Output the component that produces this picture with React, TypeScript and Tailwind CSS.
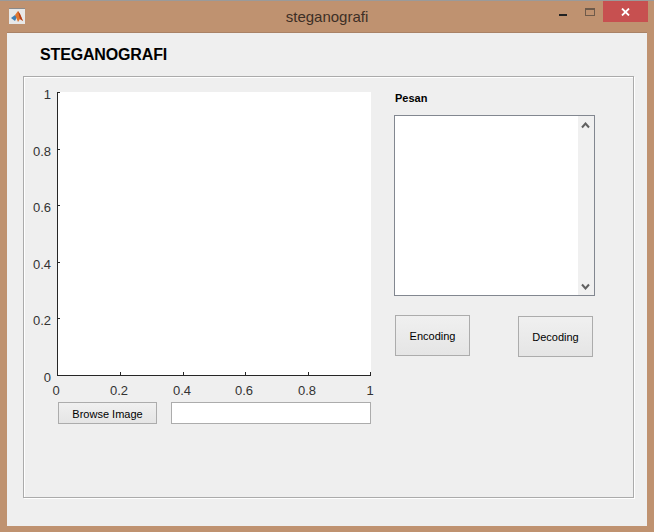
import React from 'react';

const font = { fontFamily: '"Liberation Sans", Arial, sans-serif' };

const ticks = [0, 0.2, 0.4, 0.6, 0.8, 1];

// axes drawn like the MATLAB figure: white plot, left and bottom lines, short inward ticks
function Axes() {
  const left = 33;
  const top = 8;
  const w = 314;
  const h = 283;
  return (
    <svg width={350} height={318} className="block" style={font}>
      <rect x={left} y={top} width={w} height={h} fill="#fff" />
      <path d={`M${left + 0.5} ${top}V${top + h + 0.5}H${left + w}`} fill="none" stroke="#262626" strokeWidth={1} />
      {ticks.map((t) => {
        const x = Math.round(left + t * w);
        const y = Math.round(top + h - t * h);
        return (
          <g key={t}>
            <path d={`M${x + (t === 1 ? -0.5 : 0.5)} ${top + h}v-3`} stroke="#262626" />
            <path d={`M${left} ${y + 0.5}h3`} stroke="#262626" />
            <text x={x - 1} y={top + h + 20} fontSize={13} fill="#333" textAnchor="middle">{t}</text>
            <text x={27} y={top + h - t * h + 7} fontSize={13} fill="#333" textAnchor="end">{t}</text>
          </g>
        );
      })}
    </svg>
  );
}

function Btn({ label, className }: { label: string; className: string }) {
  return (
    <button className={`border border-[#acacac] bg-gradient-to-b from-[#f0f0f0] to-[#e5e5e5] text-[11px] text-black ${className}`}>
      {label}
    </button>
  );
}

export default function App() {
  return (
    <div className="w-[654px] h-[532px] bg-[#bf9270] flex flex-col overflow-hidden" style={font}>
      <div className="h-px bg-[#9a9a9a] shrink-0" />
      {/* title bar */}
      <div className="h-[31px] shrink-0 flex items-start relative">
        <div className="ml-[9px] mt-[7px] w-[16px] h-[16px] bg-[#e8e8e8] border-t border-[#8a8a8a] flex items-center justify-center">
          <svg width="14" height="13" viewBox="0 0 14 13">
            <path d="M1 8l4-3 2 2-2 4z" fill="#3f7fb5" />
            <path d="M5 5l3-4 2 3 3 7-3-2-2 3-2-5z" fill="#e0762f" />
            <path d="M8 1l2 3 3 7-3-2z" fill="#b23f1c" />
          </svg>
        </div>
        <div className="absolute left-0 right-0 top-[7px] text-center text-[15px] leading-[18px] text-[#3d2f26]">steganografi</div>
        <div className="ml-auto flex items-start mr-[6px]">
          <div className="mt-[13px] w-[8px] h-[2px] bg-[#222]" />
          <div className="ml-[18px] mt-[7px] w-[10px] h-[8px] border border-[#6e5a4a] border-t-2" />
          <div className="ml-[8px] w-[45px] h-[21px] bg-[#c75050] flex items-center justify-center">
            <svg width="9" height="8" viewBox="0 0 9 8"><path d="M1 0.5l7 7M8 0.5l-7 7" stroke="#fff" strokeWidth="1.8" /></svg>
          </div>
        </div>
      </div>

      {/* figure area */}
      <div className="ml-[7px] w-[640px] h-[494px] bg-[#efefef] border-t border-[#a98266] pt-[43px] pl-[16px] relative">
        <div className="absolute left-[33px] top-[12px] text-[16px] leading-[20px] font-bold text-black tracking-[-0.15px]">STEGANOGRAFI</div>
        <div className="w-[611px] h-[422px] border border-[#ababab] shadow-[inset_1px_1px_0_#fff,1px_1px_0_#fff] flex items-start">
          <div className="mt-[7px] flex flex-col">
            <Axes />
            <div className="flex ml-[34px] gap-[14px]">
              <Btn label="Browse Image" className="w-[99px] h-[22px] pt-[2px]" />
              <input className="w-[200px] h-[22px] bg-white border border-[#acacac]" />
            </div>
          </div>
          <div className="ml-[20px] flex flex-col">
            <div className="mt-[15px] ml-[1px] text-[11px] leading-[13px] font-bold text-black">Pesan</div>
            <div className="mt-[10px] w-[201px] h-[181px] bg-white border border-[#828790] flex justify-end">
              <div className="w-[16px] h-full bg-[#f0f0f0] flex flex-col items-center justify-between pt-[6px] pb-[5px] pr-px">
                <svg width="9" height="7" viewBox="0 0 9 7"><path d="M1 5.5l3.5-4 3.5 4" fill="none" stroke="#606060" strokeWidth="2" /></svg>
                <svg width="9" height="7" viewBox="0 0 9 7"><path d="M1 1.5l3.5 4 3.5-4" fill="none" stroke="#606060" strokeWidth="2" /></svg>
              </div>
            </div>
            <div className="flex items-start mt-[19px] ml-[1px]">
              <Btn label="Encoding" className="w-[75px] h-[41px] pt-px" />
              <Btn label="Decoding" className="w-[75px] h-[41px] ml-[48px] mt-px pt-px" />
            </div>
          </div>
        </div>
      </div>
    </div>
  );
}
